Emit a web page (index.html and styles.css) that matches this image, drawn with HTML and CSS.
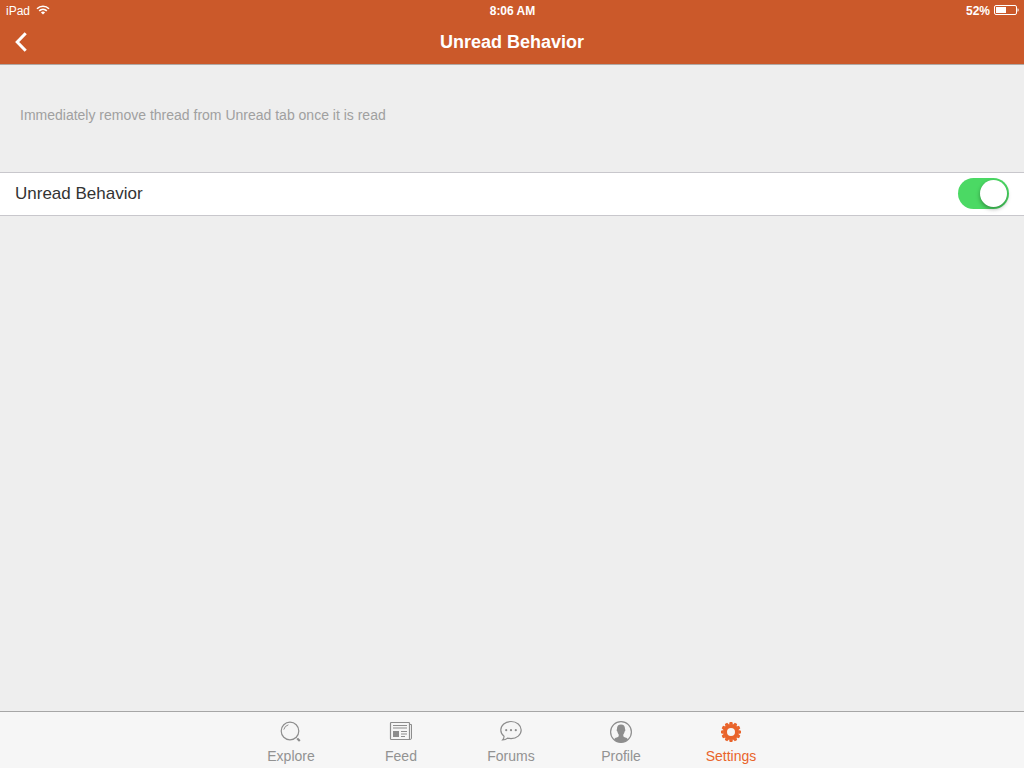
FILE: index.html
```html
<!DOCTYPE html>
<html lang="en">
<head>
<meta charset="utf-8">
<meta name="viewport" content="width=device-width, initial-scale=1">
<title>Unread Behavior</title>
<link rel="stylesheet" href="styles.css">
</head>
<body>
<header class="top">
  <div class="status">
    <div class="status-side">
      <span>iPad</span>
      <svg class="wifi" width="14" height="10" viewBox="0 0 14 10" fill="none" stroke="#fff" stroke-width="1.6" aria-hidden="true">
        <path d="M1 3.7a8.6 8.6 0 0 1 12 0M3.2 5.9a5.5 5.5 0 0 1 7.6 0"/>
        <path d="M7 9.6 4.9 7.5a3 3 0 0 1 4.2 0z" fill="#fff" stroke="none"/>
      </svg>
    </div>
    <span class="status-strong">8:06 AM</span>
    <div class="status-side status-right">
      <span class="status-strong">52%</span>
      <svg class="battery" width="25" height="10" viewBox="0 0 25 10" aria-hidden="true">
        <rect x=".5" y=".5" width="22" height="9" rx="1.5" fill="none" stroke="#fff"/>
        <rect x="2" y="2" width="10" height="6" fill="#fff"/>
        <path d="M23.5 3.2q1.2.3 1.2 1.8t-1.2 1.8z" fill="#fff"/>
      </svg>
    </div>
  </div>
  <div class="nav">
    <button class="back" type="button" aria-label="Back">
      <svg width="12" height="20" viewBox="0 0 12 20" fill="none" stroke="#fff" stroke-width="3" aria-hidden="true"><path d="M10.7 1.2 2.2 10l8.5 8.8"/></svg>
    </button>
    <h1 class="title">Unread Behavior</h1>
  </div>
</header>
<main class="content">
  <p class="hint">Immediately remove thread from Unread tab once it is read</p>
  <div class="row">
    <label class="row-label" for="unread">Unread Behavior</label>
    <input class="switch" id="unread" type="checkbox" role="switch" checked>
  </div>
</main>
<nav class="tabs">
  <a class="tab" href="#explore">
    <svg width="24" height="24" viewBox="0 0 24 24" fill="none" stroke="#8d8d8d" aria-hidden="true">
      <circle cx="11" cy="11" r="8.8" stroke-width="1.2"/><path d="M4.8 9.6a6.4 6.4 0 0 1 4.6-4.8"/><path d="m17.3 17.5 1.2 1.2"/><path d="m18.3 18.5 2.5 2.5" stroke-width="2.2"/>
    </svg>
    <span>Explore</span>
  </a>
  <a class="tab" href="#feed">
    <svg width="24" height="24" viewBox="0 0 24 24" fill="none" stroke="#8d8d8d" aria-hidden="true">
      <rect x="1.5" y="2.5" width="19" height="17" rx=".8" stroke-width="1.2"/><path d="M20.5 4.5h2v13.6q0 1.4-1.4 1.4h-1.600"/><path d="M4 5.500h14M4 8h14M12 11.500h6M12 14h6M12 16.500h4"/><rect x="4" y="11" width="6" height="6" fill="#8d8d8d" stroke="none"/>
    </svg>
    <span>Feed</span>
  </a>
  <a class="tab" href="#forums">
    <svg width="24" height="24" viewBox="0 0 24 24" fill="none" stroke="#8d8d8d" aria-hidden="true">
      <path d="M12 1.5c5.8 0 10.2 3.8 10.2 8.6s-4.4 8.5-10.2 8.5q-1.8 0-3.4-.5-2.1 1.9-5 1.9 1.5-1.6 1.4-3.8-3.2-2.4-3.2-6.1C1.8 5.3 6.2 1.5 12 1.5z" stroke-width="1.2"/>
      <g fill="#8d8d8d" stroke="none"><circle cx="7.2" cy="10.2" r="1.1"/><circle cx="12" cy="10.2" r="1.1"/><circle cx="16.8" cy="10.2" r="1.1"/></g>
    </svg>
    <span>Forums</span>
  </a>
  <a class="tab" href="#profile">
    <svg width="24" height="24" viewBox="0 0 24 24" aria-hidden="true">
      <circle cx="12" cy="12" r="10.4" fill="none" stroke="#8d8d8d" stroke-width="1.2"/>
      <path d="M12 4.600c2.800 0 4.200 1.800 4 4.600.6.2.4 2-.4 2.400-.2 1.400-.8 2.300-1.300 2.900v1.700c.8 1 2.900 1.300 4 2.200.3.3.5.7.6 1.100a9.500 9.500 0 0 1-13.800 0c.1-.4.3-.8.6-1.100 1.100-.9 3.200-1.200 4-2.200v-1.700c-.5-.6-1.100-1.500-1.300-2.900-.8-.4-1-2.200-.4-2.400-.2-2.800 1.200-4.600 4-4.600z" fill="#8d8d8d"/>
    </svg>
    <span>Profile</span>
  </a>
  <a class="tab tab-active" href="#settings" aria-current="page">
    <svg width="24" height="24" viewBox="-12 -12 24 24" fill="#e9642b" aria-hidden="true">
      <circle r="6" fill="none" stroke="#e9642b" stroke-width="4"/>
      <path id="teeth" d="M-2-7.500-1.300-10h2.600l.7 2.500zM-2 7.500-1.300 10h2.600l.7-2.500z"/>
      <use href="#teeth" transform="rotate(30)"/><use href="#teeth" transform="rotate(60)"/><use href="#teeth" transform="rotate(90)"/><use href="#teeth" transform="rotate(120)"/><use href="#teeth" transform="rotate(150)"/>
    </svg>
    <span>Settings</span>
  </a>
</nav>
</body>
</html>
```
FILE: styles.css
```css
* { box-sizing: border-box; }

body {
  margin: 0;
  min-height: 100vh;
  display: flex;
  flex-direction: column;
  background: #eee;
  color: #333;
  font-family: "Liberation Sans", Arial, sans-serif;
}

.top {
  background: #cb592a;
  color: #fff;
  border-bottom: 1px solid #b0a8a4;
}

.status {
  display: grid;
  grid-template-columns: 1fr auto 1fr;
  align-items: center;
  height: 20px;
  padding: 2px 5px 0 6px;
  font-size: 12px;
  line-height: 18px;
}

.status-strong {
  font-size: 12px;
  font-weight: 700;
}

.status-side {
  display: flex;
  align-items: center;
  gap: 6px;
}

.status-right {
  justify-content: flex-end;
  gap: 4px;
}

.wifi,
.battery { display: block; margin-bottom: 2px; }

.nav {
  display: grid;
  grid-template-columns: 44px 1fr 44px;
  align-items: center;
  height: 44px;
}

.back {
  display: flex;
  align-items: center;
  height: 44px;
  padding: 0 0 0 15px;
  border: 0;
  background: none;
}

.title {
  margin: 0;
  text-align: center;
  font-size: 18px;
  font-weight: 700;
  line-height: 24px;
}

.content { flex: 1; }

.hint {
  margin: 0;
  padding: 40px 20px 47px;
  color: #a0a0a0;
  font-size: 14px;
  line-height: 20px;
}

.row {
  display: flex;
  align-items: center;
  justify-content: space-between;
  height: 44px;
  padding: 0 15px 1px;
  background: #fff;
  border-top: 1px solid #c8c7cc;
  border-bottom: 1px solid #c8c7cc;
}

.row-label {
  font-size: 17px;
  line-height: 23px;
}

.switch {
  appearance: none;
  display: flex;
  justify-content: flex-end;
  width: 51px;
  height: 31px;
  margin: 0;
  padding: 2px;
  border-radius: 16px;
  background: #4bd964;
}

.switch::before {
  content: "";
  width: 27px;
  height: 27px;
  border-radius: 50%;
  background: #fff;
  box-shadow: 0 2px 4px rgba(0, 0, 0, .35);
}

.switch:not(:checked) {
  justify-content: flex-start;
  background: #ddd;
}

.tabs {
  display: flex;
  justify-content: center;
  gap: 34px;
  height: 57px;
  padding: 8px 2px 0 0;
  background: #f6f6f6;
  border-top: 1px solid #a6a6a6;
}

.tab {
  display: flex;
  flex-direction: column;
  align-items: center;
  gap: 3px;
  width: 76px;
  color: #929292;
  font-size: 14px;
  line-height: 18px;
  text-decoration: none;
}

.tab-active { color: #e9642b; }
```
